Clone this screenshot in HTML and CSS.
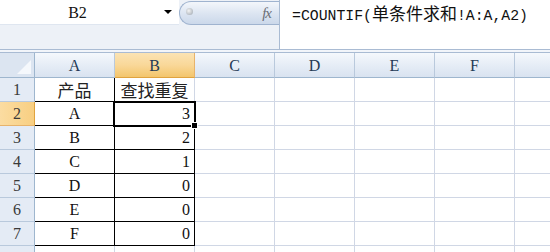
FILE: index.html
```html
<!DOCTYPE html>
<html lang="zh-CN">
<head>
  <meta charset="UTF-8" />
  <title>查找重复</title>
  <link rel="stylesheet" href="styles.css">
</head>
<body>

<div id="sheet">
  <div class="topbar">
    <div class="left-panel">
      <div class="name-row">
        <div class="name-box">
          <span class="name-text">B2</span>
          <span class="drop-arrow"></span>
        </div>
        <div class="fx-pill">
          <span class="fx-dot"></span>
          <span class="fx-text">fx</span>
        </div>
      </div>
    </div>
    <div class="formula">=COUNTIF(<span class="cjk">单条件求和</span>!A:A,A2)</div>
  </div>

  <div class="gap"></div>

  <div class="grid">
    <div class="hd corner"><span class="tri"></span></div>
    <div class="hd col">A</div>
    <div class="hd col active">B</div>
    <div class="hd col">C</div>
    <div class="hd col">D</div>
    <div class="hd col">E</div>
    <div class="hd col">F</div>
    <div class="hd col"></div>

    <div class="hd row">1</div>
    <div class="cell center cjk-cell bl">产品</div>
    <div class="cell center cjk-cell bl-b">查找重复</div>
    <div class="cell"></div><div class="cell"></div><div class="cell"></div><div class="cell"></div><div class="cell"></div>

    <div class="hd row active">2</div>
    <div class="cell center bl">A</div>
    <div class="cell num bl-b selected">3</div>
    <div class="cell"></div><div class="cell"></div><div class="cell"></div><div class="cell"></div><div class="cell"></div>

    <div class="hd row">3</div>
    <div class="cell center bl">B</div>
    <div class="cell num bl-b">2</div>
    <div class="cell"></div><div class="cell"></div><div class="cell"></div><div class="cell"></div><div class="cell"></div>

    <div class="hd row">4</div>
    <div class="cell center bl">C</div>
    <div class="cell num bl-b">1</div>
    <div class="cell"></div><div class="cell"></div><div class="cell"></div><div class="cell"></div><div class="cell"></div>

    <div class="hd row">5</div>
    <div class="cell center bl">D</div>
    <div class="cell num bl-b">0</div>
    <div class="cell"></div><div class="cell"></div><div class="cell"></div><div class="cell"></div><div class="cell"></div>

    <div class="hd row">6</div>
    <div class="cell center bl">E</div>
    <div class="cell num bl-b">0</div>
    <div class="cell"></div><div class="cell"></div><div class="cell"></div><div class="cell"></div><div class="cell"></div>

    <div class="hd row">7</div>
    <div class="cell center bl">F</div>
    <div class="cell num bl-b">0</div>
    <div class="cell"></div><div class="cell"></div><div class="cell"></div><div class="cell"></div><div class="cell"></div>

    <div class="hd row"></div>
    <div class="cell"></div><div class="cell"></div><div class="cell"></div><div class="cell"></div><div class="cell"></div><div class="cell"></div><div class="cell"></div>
  </div>
</div>

</body>
</html>
```

FILE: styles.css
```css
body {
  margin: 0;
  padding: 0;
  background-color: #fff;
  font-family: "Liberation Serif", "Noto Sans CJK SC", serif;
}

#sheet {
  width: 550px;
  height: 252px;
  overflow: hidden;
}

/* formula bar */
.topbar {
  display: flex;
  height: 49px;
  border-bottom: 1px solid #a9bbd3;
}

.left-panel {
  width: 279px;
  background-color: #edf1f7;
  border-right: 1px solid #a9bbd3;
}

.name-row {
  display: flex;
  height: 25px;
}

.name-box {
  width: 179px;
  background-color: #fff;
  display: flex;
  align-items: center;
  border-bottom: 1px solid #dfe6f0;
}

.name-text {
  width: 155px;
  text-align: center;
  font-size: 16px;
  color: #111;
  padding-top: 1px;
}

.drop-arrow {
  margin-left: 9px;
  width: 0;
  height: 0;
  border-left: 4px solid transparent;
  border-right: 4px solid transparent;
  border-top: 4px solid #000;
}

.fx-pill {
  flex: 1;
  margin: 1px 0 0 0;
  height: 22px;
  border: 1px solid #9fb3cf;
  border-right: none;
  border-radius: 12px 0 0 12px;
  background: linear-gradient(#f3f6fb, #dbe4f1 55%, #cbd8ea);
  display: flex;
  align-items: center;
  justify-content: space-between;
  padding: 0 8px 0 6px;
}

.fx-dot {
  width: 7px;
  height: 7px;
  border-radius: 50%;
  background: radial-gradient(circle at 40% 40%, #f4f4f4, #9aa3ad);
  margin-top: -4px;
}

.fx-text {
  font-family: "Liberation Serif", serif;
  font-style: italic;
  font-size: 15px;
  color: #6b6f76;
  letter-spacing: -1px;
}

.formula {
  flex: 1;
  background-color: #fff;
  padding: 4px 0 0 12px;
  font-family: "Liberation Mono", monospace;
  font-size: 14.8px;
  color: #111;
  white-space: nowrap;
}

.formula .cjk {
  font-family: "Noto Sans CJK SC", sans-serif;
  font-size: 17px;
  line-height: 1;
}

.gap {
  height: 2px;
  background-color: #f2f5fa;
}

/* grid */
.grid {
  display: grid;
  grid-template-columns: 35px repeat(7, 80px);
  grid-template-rows: 25px repeat(8, 24px);
  border-top: 1px solid #a9bbd3;
}

.hd {
  display: flex;
  align-items: center;
  justify-content: center;
  font-size: 16px;
  color: #243a56;
  box-sizing: border-box;
}

.hd.col {
  background: linear-gradient(#f5f8fc, #e6edf6 50%, #d9e3f0);
  border-right: 1px solid #b9c9dc;
  border-bottom: 1px solid #9eb6ce;
  padding-top: 2px;
}

.hd.row {
  background-color: #e4ebf5;
  border-right: 1px solid #9eb6ce;
  border-bottom: 1px solid #b9c9dc;
  color: #3a3a3a;
}

.hd.col.active {
  background: linear-gradient(#fbe3b4, #f9d899 50%, #f3c56c);
  border-bottom-color: #e0a33f;
  border-right-color: #e7b36b;
}

.hd.row.active {
  background: linear-gradient(90deg, #fbdca1, #f8cf82);
  border-bottom-color: #e7b36b;
  border-right-color: #e0a33f;
}

.corner {
  background-color: #dce5f1;
  border-right: 1px solid #9eb6ce;
  border-bottom: 1px solid #9eb6ce;
  position: relative;
}

.tri {
  position: absolute;
  right: 3px;
  bottom: 3px;
  width: 0;
  height: 0;
  border-left: 14px solid transparent;
  border-bottom: 14px solid #f5f8fc;
}

.cell {
  box-sizing: border-box;
  border-right: 1px solid #d0d7e5;
  border-bottom: 1px solid #d0d7e5;
  display: flex;
  align-items: center;
  font-size: 16px;
  color: #111;
  position: relative;
}

.cell.center {
  justify-content: center;
}

.cell.num {
  justify-content: flex-end;
  padding-right: 4px;
}

.cjk-cell {
  font-family: "Noto Sans CJK SC", sans-serif;
  font-size: 17px;
  color: #222;
}

/* black table borders for A1:B7 */
.bl {
  border-right-color: #000;
  border-bottom-color: #000;
}

.bl-b {
  border-bottom-color: #000;
  border-right-color: #000;
}

.grid > .cell.bl-b:nth-child(11) {
  border-right-color: #d0d7e5;
}

.selected::after {
  content: "";
  position: absolute;
  left: -2px;
  top: -1px;
  right: -2px;
  bottom: -2px;
  border: 2px solid #000;
}

.selected::before {
  content: "";
  position: absolute;
  right: -4px;
  bottom: -4px;
  width: 5px;
  height: 5px;
  background-color: #000;
  border: 1px solid #fff;
  z-index: 2;
}
```
